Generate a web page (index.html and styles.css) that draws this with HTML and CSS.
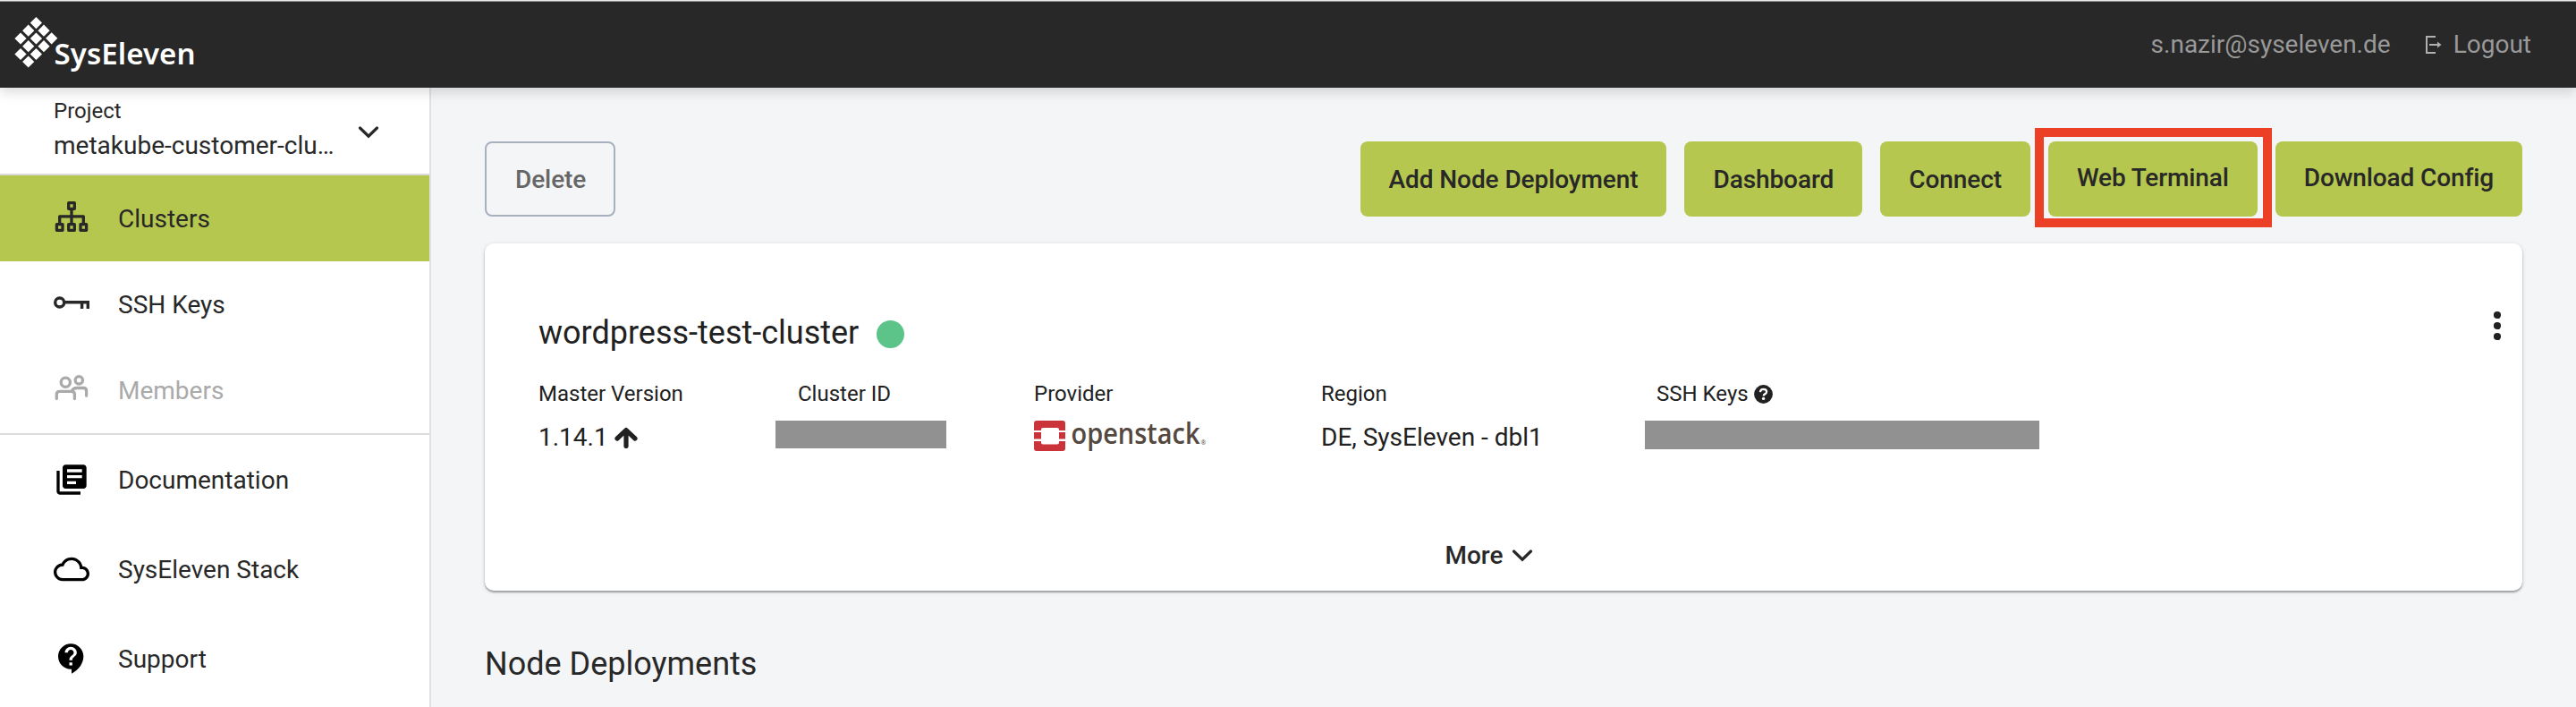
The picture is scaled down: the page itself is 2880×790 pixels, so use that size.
FILE: index.html
```html
<!DOCTYPE html>
<html lang="en">
<head>
<meta charset="utf-8">
<title>SysEleven MetaKube</title>
<link rel="stylesheet" href="styles.css">
</head>
<body>
<header class="topbar">
  <svg class="brand" width="210" height="66" viewBox="14 16 210 66" role="img" aria-label="SysEleven">
    <defs><path id="d" d="M0-6.6 6.6 0 0 6.6-6.6 0z"/></defs>
    <g fill="#fff">
      <use href="#d" x="40.4" y="24.6"/>
      <use href="#d" x="31.7" y="33.2"/><use href="#d" x="49" y="33.2"/>
      <use href="#d" x="23" y="42"/><use href="#d" x="40.4" y="42"/><use href="#d" x="57.7" y="41.8"/>
      <use href="#d" x="31.7" y="50.7"/><use href="#d" x="49" y="50.7"/>
      <use href="#d" x="23" y="59.5"/><use href="#d" x="40.4" y="59.5"/>
      <use href="#d" x="31.7" y="68"/>
    </g>
    <text class="brand-text" x="60.5" y="70.5" textLength="158" lengthAdjust="spacing">SysEleven</text>
  </svg>
  <div class="account">
    <span class="email">s.nazir@syseleven.de</span>
    <a class="logout">
      <svg width="18" height="20" viewBox="0 0 18 20" fill="none" stroke="#b0b0b0" stroke-width="2"><path d="M11 1H1v18h10M4 10h11"/><path d="M13 6.5 17.5 10 13 13.5z" fill="#b0b0b0" stroke="none"/></svg>
      <span>Logout</span>
    </a>
  </div>
</header>
<div class="layout">
  <aside class="sidebar">
    <div class="project">
      <div class="project-info">
        <span class="project-label">Project</span>
        <span class="project-name">metakube-customer-clu…</span>
      </div>
      <svg class="chevron" width="24" height="14" viewBox="0 0 24 14"><path d="M2.5 2 12 11.2 21.5 2"/></svg>
    </div>
    <nav class="nav">
      <a class="item active">
        <svg width="40" height="40" viewBox="60 224 40 40" fill="none" stroke="#282828" stroke-width="3.3" stroke-linejoin="round"><path d="M76.7 226.7h6.6v6.6h-6.6zM63.4 250.7H70v6.6h-6.6zM76.7 250.7h6.6v6.6h-6.6zM90 250.7h6.6v6.6H90zM80 234v16M66.7 250v-8.2h26.6v8.2"/></svg>
        <span>Clusters</span>
      </a>
      <a class="item">
        <svg width="40" height="40" viewBox="60 320 40 40" fill="none" stroke="#282828" stroke-width="3.4"><circle cx="66.7" cy="338" r="5"/><path d="M72 337.8h28M91.6 338v7M98.3 338v7"/></svg>
        <span>SSH Keys</span>
      </a>
      <a class="item disabled">
        <svg width="40" height="40" viewBox="60 416 40 40" fill="none" stroke="#aaa" stroke-width="3.3" stroke-linecap="round"><circle cx="73.3" cy="427.3" r="5.1"/><circle cx="88.3" cy="424.8" r="4.2"/><path d="M63.3 445.6v-5q0-3.3 3.3-3.3h13.4q3.4 0 3.4 3.3v5M80.5 436.5q2-3 5-3h7.8q3.3 0 3.3 3.3v5.4"/></svg>
        <span>Members</span>
      </a>
    </nav>
    <nav class="nav links">
      <a class="item">
        <svg width="40" height="40" viewBox="0 0 24 24"><path d="M4 6H2v14c0 1.1.9 2 2 2h14v-2H4V6zm16-4H8c-1.100 0-2 .9-2 2v12c0 1.100.9 2 2 2h12c1.100 0 2-.9 2-2V4c0-1.100-.9-2-2-2zm-1 9H9V9h10v2zm-4 4H9v-2h6v2zm4-8H9V5h10v2z"/></svg>
        <span>Documentation</span>
      </a>
      <a class="item">
        <svg width="40" height="40" viewBox="0 0 24 24"><path d="M19.350 10.040C18.670 6.590 15.640 4 12 4 9.110 4 6.600 5.640 5.350 8.040 2.340 8.360 0 10.910 0 14c0 3.310 2.690 6 6 6h13c2.760 0 5-2.240 5-5 0-2.640-2.050-4.780-4.650-4.960zM19 18H6c-2.210 0-4-1.790-4-4s1.790-4 4-4h.71C7.370 7.690 9.480 6 12 6c3.040 0 5.500 2.460 5.500 5.500v.5H19c1.660 0 3 1.340 3 3s-1.340 3-3 3z"/></svg>
        <span>SysEleven Stack</span>
      </a>
      <a class="item">
        <svg width="40" height="40" viewBox="0 0 24 24"><path d="M11.500 2C6.810 2 3 5.810 3 10.500S6.810 19 11.500 19h.5v3c4.860-2.340 8-7 8-11.500C20 5.810 16.190 2 11.500 2zm1 14.500h-2v-2h2v2zm0-3.500h-2c0-3.250 3-3 3-5 0-1.100-.9-2-2-2s-2 .9-2 2h-2c0-2.210 1.790-4 4-4s4 1.790 4 4c0 2.500-3 2.750-3 5z"/></svg>
        <span>Support</span>
      </a>
    </nav>
  </aside>
  <main class="content">
    <div class="actions">
      <button class="btn outline">Delete</button>
      <div class="group">
        <button class="btn">Add Node Deployment</button>
        <button class="btn">Dashboard</button>
        <button class="btn">Connect</button>
        <button class="btn raised marked">Web Terminal</button>
        <button class="btn raised">Download Config</button>
      </div>
    </div>
    <section class="card">
      <div class="card-head">
        <h1 class="title">wordpress-test-cluster</h1>
        <span class="status"></span>
        <svg class="menu" width="10" height="34" viewBox="0 0 10 34" fill="#212121"><circle cx="5" cy="5" r="4.100"/><circle cx="5" cy="17" r="4.100"/><circle cx="5" cy="29" r="4.100"/></svg>
      </div>
      <div class="facts">
        <div class="fact">
          <span class="label">Master Version</span>
          <span class="value">1.14.1 <svg class="up" width="26" height="24" viewBox="0 0 26 24" fill="none" stroke="#212121" stroke-width="5.200" stroke-linecap="round" stroke-linejoin="round"><path d="M13 4v17.500M3 13 13 3.600 23 13"/></svg></span>
        </div>
        <div class="fact">
          <span class="label id-label">Cluster ID</span>
          <span class="redacted id-bar"></span>
        </div>
        <div class="fact">
          <span class="label">Provider</span>
          <svg class="openstack" width="204" height="52" viewBox="1156 460 204 52" role="img" aria-label="openstack">
            <path fill="#cb333b" d="M1159 470h29q3 0 3 3v8h-7v-1q0-2-2-2h-16q-2 0-2 2v1h-8v-8q0-3 3-3zM1156 483h8v7.500h-8zM1184 483h7v7.500h-7zM1156 493h8v1.500q0 2 2 2h16q2 0 2-2V493h7v8q0 3-3 3h-29q-3 0-3-3z"/>
            <text class="os-text" x="1197.500" y="495.700" textLength="144" lengthAdjust="spacingAndGlyphs">openstack</text>
            <text class="os-mark" x="1342.500" y="496.500">®</text>
          </svg>
        </div>
        <div class="fact">
          <span class="label">Region</span>
          <span class="value">DE, SysEleven - dbl1</span>
        </div>
        <div class="fact">
          <span class="label key-label">SSH Keys
            <svg class="help" width="21" height="21" viewBox="0 0 21 21"><circle cx="10.500" cy="10.500" r="10.400" fill="#212121"/><path d="M6.900 8.100q.3-3.300 3.700-3.300 3.400.1 3.500 3-.1 1.700-2 2.600-1.400.7-1.400 2" fill="none" stroke="#fff" stroke-width="2.300"/><circle cx="10.600" cy="15.400" r="1.700" fill="#fff"/></svg>
          </span>
          <span class="redacted key-bar"></span>
        </div>
      </div>
      <div class="more">
        <span>More</span>
        <svg class="chevron" width="24" height="14" viewBox="0 0 24 14"><path d="M2.500 2 12 11.200 21.500 2"/></svg>
      </div>
    </section>
    <h2 class="title section-title">Node Deployments</h2>
  </main>
</div>
</body>
</html>
```
FILE: styles.css
```css
* { box-sizing: border-box; }
body {
  margin: 0;
  height: 790px;
  overflow: hidden;
  display: flex;
  flex-direction: column;
  background: #f4f5f7;
  color: #282828;
  font: 28px/36px Roboto, sans-serif;
}
svg { flex: none; display: block; }
.topbar {
  position: relative;
  z-index: 2;
  flex: none;
  height: 98px;
  padding: 0 50px 0 14px;
  display: flex;
  justify-content: space-between;
  align-items: center;
  background: #282828;
  border-top: 1px solid #e8eaeb;
  box-shadow: inset 0 1px #8e9192, 0 6px 12px rgba(0, 0, 0, .13);
}
.brand-text { font: 600 33px "Noto Sans", sans-serif; fill: #fff; }
.account { display: flex; align-items: center; gap: 39px; color: #999; padding-top: 1px; }
.logout { display: flex; align-items: center; gap: 13px; }
.layout { flex: 1; display: flex; min-height: 0; }
.sidebar { flex: none; width: 482px; background: #fff; border-right: 2px solid #dfe1e4; }
.project {
  height: 98px;
  display: flex;
  justify-content: space-between;
  align-items: flex-start;
  padding: 8px 56px 0 60px;
  border-bottom: 2px solid #dcdcdc;
}
.project-info { display: flex; flex-direction: column; }
.project-label { font-size: 24px; line-height: 36px; }
.project-name { line-height: 36px; padding-top: 3px; }
.chevron { fill: none; stroke: #282828; stroke-width: 3.2; stroke-linejoin: miter; stroke-linecap: round; }
.project .chevron { margin-top: 35px; }
.item { display: flex; align-items: center; gap: 32px; height: 96px; padding-left: 60px; }
.item span { padding-top: 2px; }
.active { background: #b5c74e; }
.disabled { color: #aaa; }
.links { border-top: 2px solid #dcdcdc; }
.links .item { height: 100px; }
.content { flex: 1; padding: 60px 60px 0; }
.actions { display: flex; justify-content: space-between; height: 84px; }
.group { display: flex; gap: 20px; }
.btn {
  height: 84px;
  padding: 1px 32px 0;
  border: 0;
  border-radius: 8px;
  background: #b5c74e;
  color: #282828;
  font: 500 28px Roboto, sans-serif;
  letter-spacing: -.08px;
  white-space: nowrap;
}
.outline { width: 146px; background: none; border: 2px solid #a7b0bc; color: #666; }
.raised { padding: 0 32px 3px; letter-spacing: -.12px; }
.marked { position: relative; }
.marked::after {
  content: "";
  position: absolute;
  inset: -15px -16px -12px -15px;
  border: 10px solid #ec4026;
}
.card {
  height: 388px;
  margin-top: 30px;
  padding: 79px 23px 0 60px;
  background: #fff;
  border-radius: 10px;
  color: #212121;
  box-shadow: 0 2px 2px rgba(0, 0, 0, .3), 0 1px 5px rgba(0, 0, 0, .13);
}
.card-head { display: flex; height: 42px; }
.title { margin: 0; font-size: 36px; line-height: 42px; font-weight: 400; }
.status { width: 31px; height: 31px; margin: 7px 0 0 20px; border-radius: 50%; background: #5cc488; }
.menu { margin: -4px 0 0 auto; }
.facts { display: grid; grid-template-columns: 265px 289px 321px 362px 441px; margin-top: 32px; }
.fact { display: flex; flex-direction: column; align-items: flex-start; height: 81px; }
.label { display: flex; align-items: center; gap: 6px; height: 30px; font-size: 24px; margin-bottom: 15px; }
.value { display: flex; align-items: center; gap: 7px; padding-top: 1px; }
.id-label { padding-left: 25px; }
.key-label { padding-left: 13px; }
.redacted { height: 31px; background: #919191; }
.id-bar { width: 191px; }
.key-bar { width: 441px; height: 32px; }
.openstack { margin-top: -10px; }
.os-text { font: 600 32px "Open Sans", sans-serif; fill: #54483f; }
.os-mark { font: 7px "Open Sans", sans-serif; fill: #54483f; }
.more { display: flex; justify-content: center; align-items: center; gap: 9px; height: 36px; margin: 97px 0 0 -70px; color: #282828; font-weight: 500; }
.section-title { margin-top: 61px; color: #282828; }
```
